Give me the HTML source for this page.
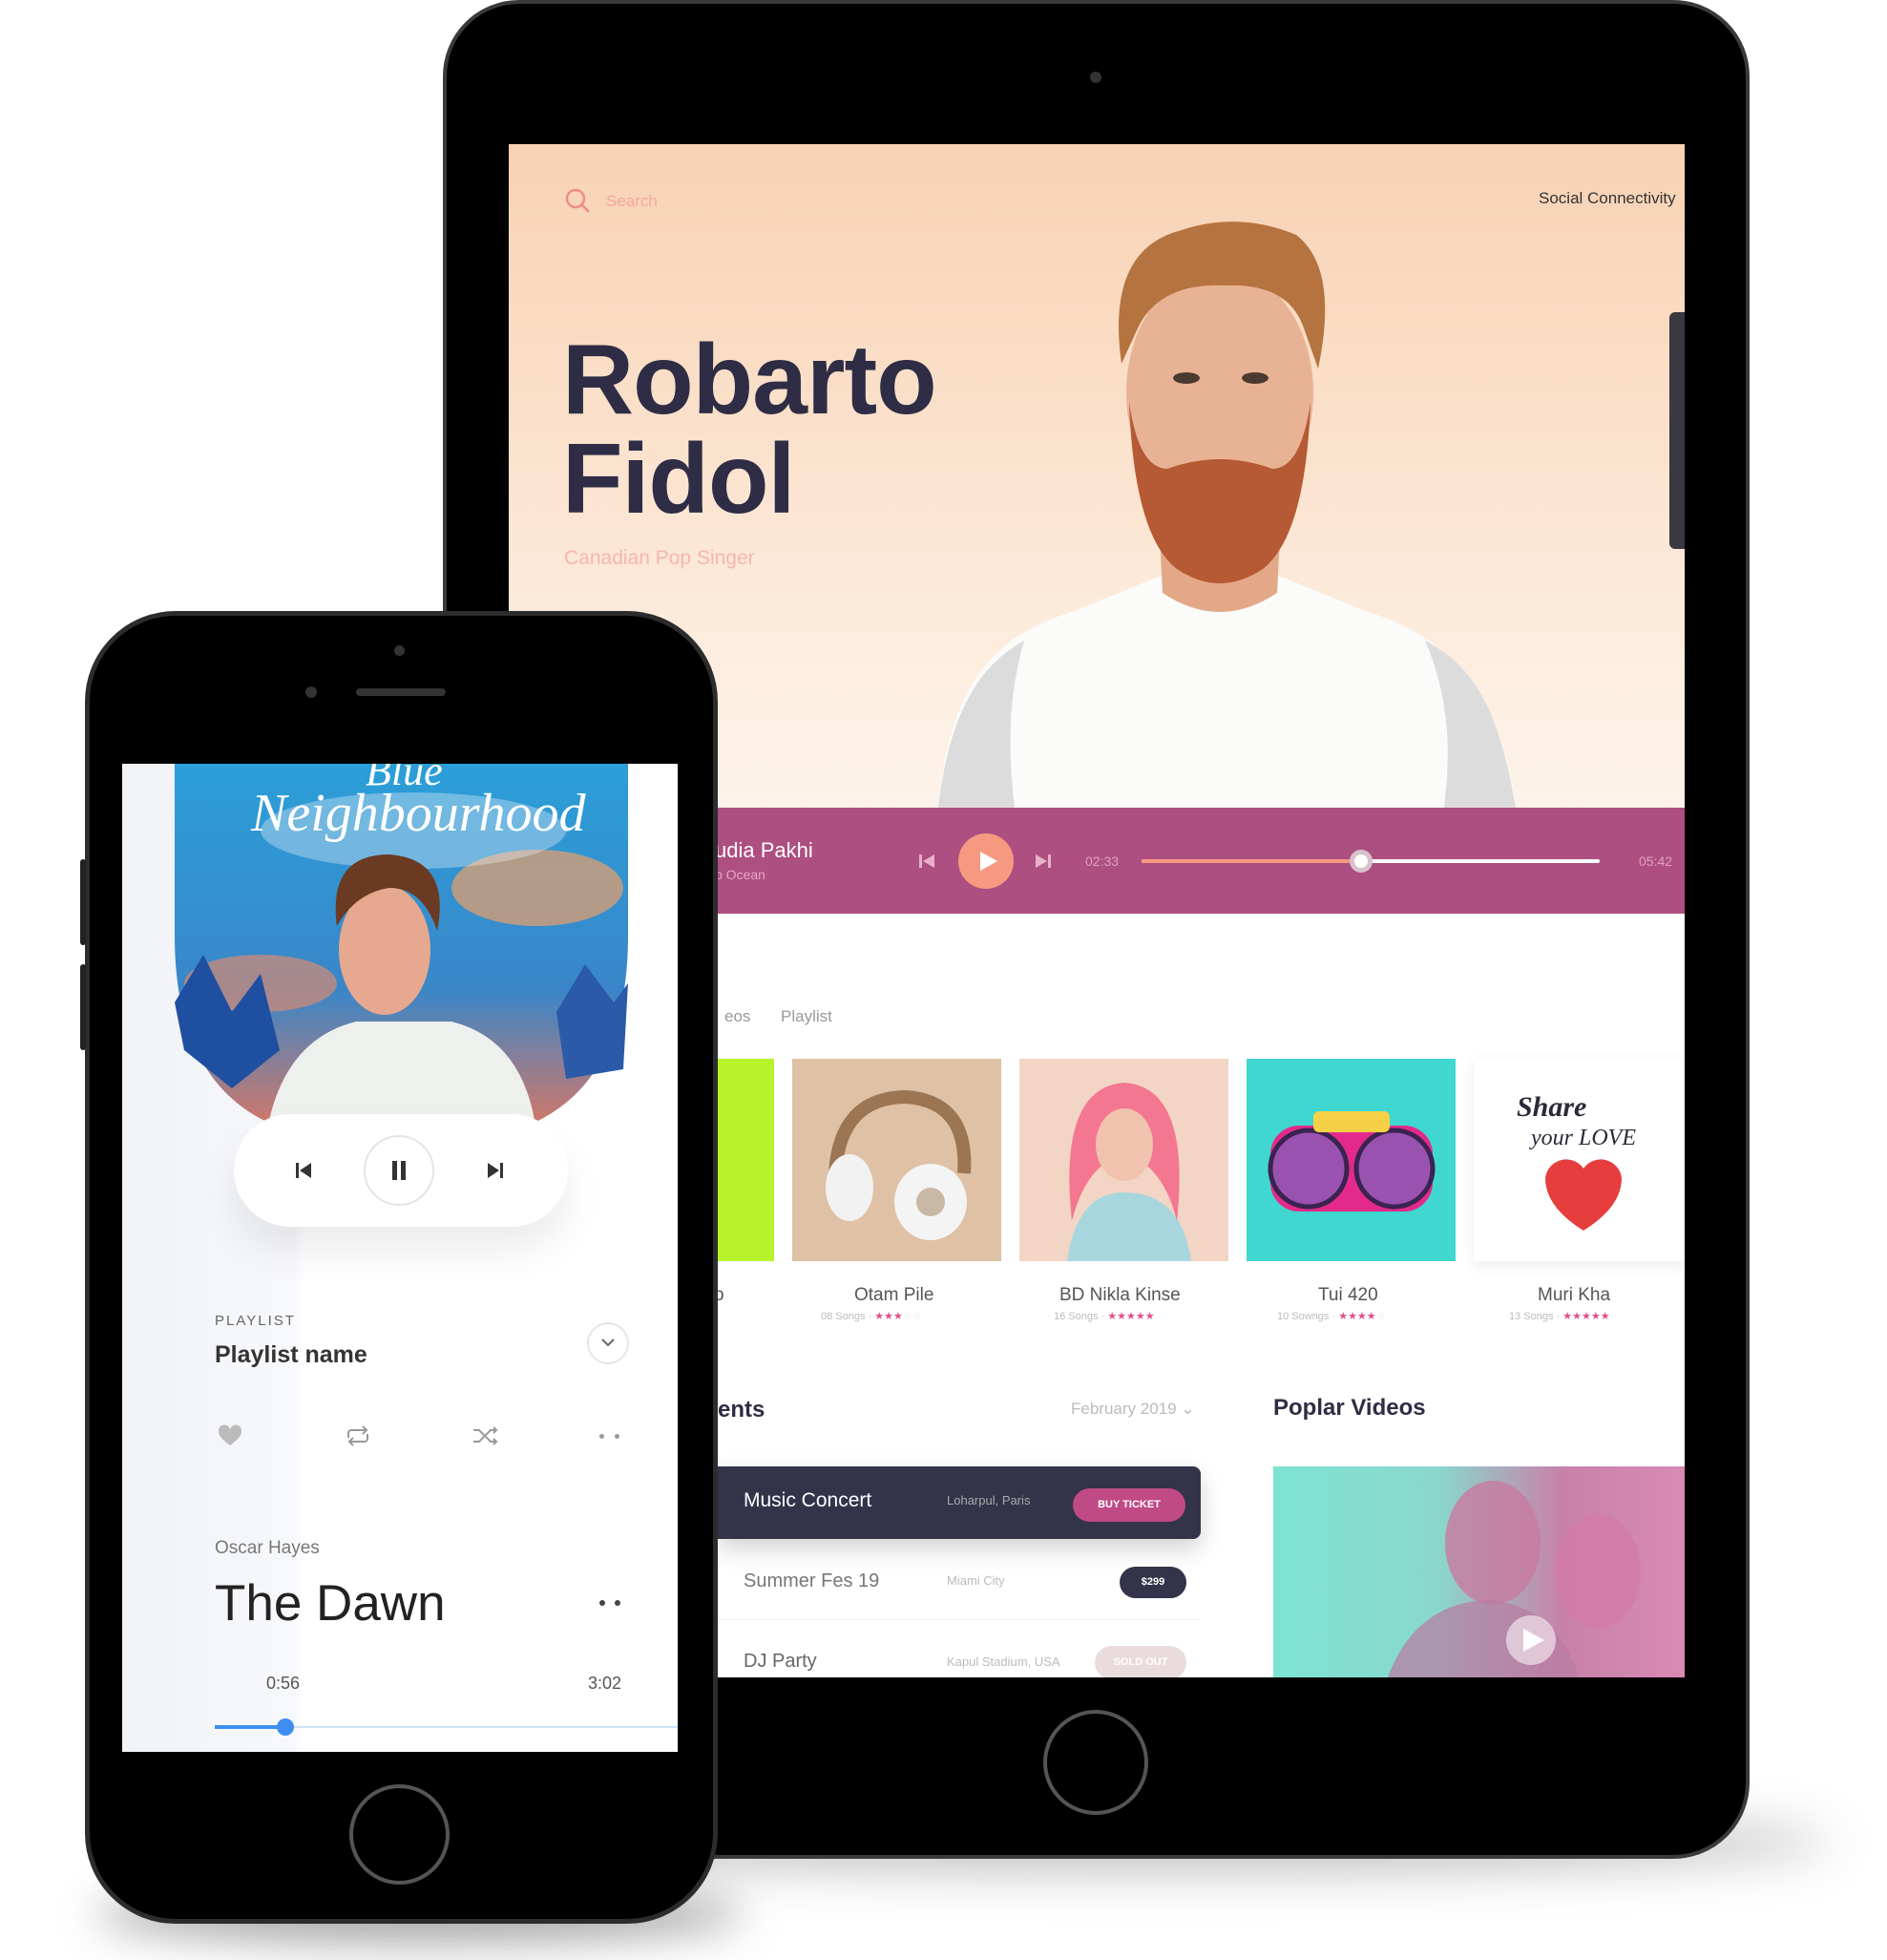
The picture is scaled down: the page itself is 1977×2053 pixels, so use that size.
<!DOCTYPE html>
<html><head><meta charset="utf-8"><style>
*{margin:0;padding:0;box-sizing:border-box}
body{width:1977px;height:2053px;background:#fff;position:relative;overflow:hidden;font-family:"Liberation Sans",sans-serif}
.a{position:absolute}
.t{position:absolute;white-space:nowrap}
</style></head><body>

<div class="a" style="left:520px;top:1900px;width:1400px;height:60px;border-radius:50%;background:rgba(0,0,0,.25);filter:blur(25px)"></div>
<div class="a" style="left:464px;top:0;width:1369px;height:1947px;background:#000;border-radius:80px;border:4px solid #3a3a3a"></div>
<div class="a" style="left:1142px;top:75px;width:12px;height:12px;border-radius:50%;background:#333"></div>
<div class="a" style="left:1093px;top:1791px;width:110px;height:110px;border-radius:50%;border:4px solid #555"></div>

<div class="a" style="left:533px;top:151px;width:1232px;height:1606px;background:#fff;overflow:hidden">
  <div class="a" style="left:0;top:0;width:1232px;height:695px;background:linear-gradient(#f8d2b4,#fdeee0 80%,#fdf3ea)"></div>
  <svg class="a" style="left:58px;top:45px" width="30" height="30" viewBox="0 0 30 30"><circle cx="12" cy="12" r="9" fill="none" stroke="#f08a8a" stroke-width="2.5"/><path d="M19 19l7 7" stroke="#f08a8a" stroke-width="2.5"/></svg>
  <div class="t" style="left:102px;top:50px;font-size:17px;color:#f4a7a0">Search</div>
  <div class="t" style="left:1079px;top:47px;font-size:17px;color:#333">Social Connectivity</div>
  <div class="t" style="left:56px;top:195px;font-size:104px;font-weight:bold;line-height:104px;color:#2e2d45;letter-spacing:-1px">Robarto<br>Fidol</div>
  <div class="t" style="left:58px;top:422px;font-size:21px;color:#f5b6ad">Canadian Pop Singer</div>
  <svg class="a" style="left:430px;top:70px" width="700" height="630" viewBox="0 0 700 630">
    <path d="M20 625 C30 520 60 450 160 420 L270 375 L360 375 L470 420 C570 450 610 520 625 625Z" fill="#fbfbfa"/>
    <path d="M20 625 C30 540 55 480 110 450 C90 520 95 580 100 625Z" fill="#dcdcdc"/>
    <path d="M625 625 C610 540 590 480 530 450 C560 520 555 580 550 625Z" fill="#dcdcdc"/>
    <path d="M250 300 L255 400 Q315 440 375 400 L380 300Z" fill="#e3a888"/>
    <ellipse cx="315" cy="190" rx="98" ry="130" fill="#e8b394"/>
    <path d="M220 200 Q225 340 270 375 Q315 405 360 375 Q405 340 410 200 Q400 270 370 270 Q315 250 260 270 Q230 270 220 200Z" fill="#b55a34"/>
    <path d="M212 160 Q195 40 275 20 Q335 0 395 25 Q440 60 418 165 L402 120 Q385 75 320 78 Q250 75 228 125Z" fill="#b5733f"/>
    <ellipse cx="280" cy="175" rx="14" ry="6" fill="#4a3a30"/><ellipse cx="352" cy="175" rx="14" ry="6" fill="#4a3a30"/>
  </svg>
  <div class="a" style="left:1216px;top:176px;width:16px;height:248px;background:#3a3840;border-radius:6px 0 0 6px"></div>
  <div class="a" style="left:0;top:695px;width:1232px;height:111px;background:#ad4f80"></div>
  <div class="t" style="left:216px;top:727px;font-size:22px;color:#fff">udia Pakhi</div>
  <div class="t" style="left:216px;top:757px;font-size:14px;color:#e7a8c6">p Ocean</div>
  <svg class="a" style="left:428px;top:743px" width="22" height="16" viewBox="0 0 22 16"><rect x="2" y="1" width="3" height="14" fill="#e9b0c9"/><path d="M18 1L6 8l12 7z" fill="#e9b0c9"/></svg>
  <div class="a" style="left:471px;top:722px;width:58px;height:58px;border-radius:50%;background:#f59a80"></div>
  <svg class="a" style="left:490px;top:739px" width="24" height="24" viewBox="0 0 24 24"><path d="M4 2l18 10-18 10z" fill="#fff"/></svg>
  <svg class="a" style="left:548px;top:743px" width="22" height="16" viewBox="0 0 22 16"><path d="M4 1l12 7-12 7z" fill="#e9b0c9"/><rect x="17" y="1" width="3" height="14" fill="#e9b0c9"/></svg>
  <div class="t" style="left:604px;top:743px;font-size:14px;color:#e39fbf">02:33</div>
  <div class="a" style="left:663px;top:749px;width:480px;height:4px;background:#fff;border-radius:2px"></div>
  <div class="a" style="left:663px;top:749px;width:230px;height:4px;background:#f59a80;border-radius:2px"></div>
  <div class="a" style="left:881px;top:739px;width:24px;height:24px;border-radius:50%;background:#fff;border:5px solid #d8c2cc"></div>
  <div class="t" style="left:1184px;top:743px;font-size:14px;color:#e39fbf">05:42</div>
  <div class="t" style="left:226px;top:904px;font-size:17px;color:#999">eos</div>
  <div class="t" style="left:285px;top:904px;font-size:17px;color:#999">Playlist</div>
  <div class="a" style="left:219px;top:958px;width:59px;height:212px;background:#b7f22a"></div>
  <div class="a" style="left:297px;top:958px;width:219px;height:212px;background:#dfc1a5"></div>
  <svg class="a" style="left:297px;top:958px" width="219" height="212"><path d="M45 120 Q50 40 120 40 Q185 45 180 120" fill="none" stroke="#9c7553" stroke-width="14"/><ellipse cx="60" cy="135" rx="25" ry="35" fill="#f2f2f2"/><ellipse cx="145" cy="150" rx="38" ry="40" fill="#f4f4f4"/><circle cx="145" cy="150" r="15" fill="#c9b8a4"/></svg>
  <div class="a" style="left:535px;top:958px;width:219px;height:212px;background:#f3d5c5"></div>
  <svg class="a" style="left:535px;top:958px" width="219" height="212"><path d="M50 212 Q60 140 110 140 Q170 140 180 212Z" fill="#a8d6de"/><path d="M55 170 Q40 30 110 25 Q180 30 165 170 Q150 110 110 100 Q70 110 55 170Z" fill="#f47792"/><ellipse cx="110" cy="90" rx="30" ry="38" fill="#f1c3ae"/></svg>
  <div class="a" style="left:773px;top:958px;width:219px;height:212px;background:#3fd7cf"></div>
  <svg class="a" style="left:773px;top:958px" width="219" height="212"><rect x="25" y="70" width="170" height="90" rx="30" fill="#e32a8a"/><circle cx="65" cy="115" r="40" fill="#9a52b0" stroke="#3a2350" stroke-width="5"/><circle cx="155" cy="115" r="40" fill="#9a52b0" stroke="#3a2350" stroke-width="5"/><rect x="70" y="55" width="80" height="22" rx="6" fill="#f6d046"/></svg>
  <div class="a" style="left:1011px;top:958px;width:221px;height:212px;background:#fff;box-shadow:0 4px 14px rgba(0,0,0,.08)"></div>
  <svg class="a" style="left:1011px;top:958px" width="219" height="212"><text x="45" y="60" font-family="Liberation Serif" font-style="italic" font-weight="bold" font-size="30" fill="#2a2a3a">Share</text><text x="60" y="90" font-family="Liberation Serif" font-style="italic" font-size="24" fill="#2a2a3a">your LOVE</text><path d="M75 125 a22 22 0 0 1 40 -10 a22 22 0 0 1 40 10 q0 30 -40 55 q-40 -25 -40 -55z" fill="#e63d3d"/></svg>
  <div class="t" style="left:215px;top:1195px;font-size:19px;color:#555">o</div>
  <div class="t" style="left:362px;top:1195px;font-size:19px;color:#555">Otam Pile</div>
  <div class="t" style="left:577px;top:1195px;font-size:19px;color:#555">BD Nikla Kinse</div>
  <div class="t" style="left:848px;top:1195px;font-size:19px;color:#555">Tui 420</div>
  <div class="t" style="left:1078px;top:1195px;font-size:19px;color:#555">Muri Kha</div>
  <div class="t" style="left:327px;top:1221px;font-size:11px;color:#bbb">08 Songs · <span style="color:#e0508a">★★★</span><span style="color:#ddd">☆☆</span></div>
  <div class="t" style="left:571px;top:1221px;font-size:11px;color:#bbb">16 Songs · <span style="color:#e0508a">★★★★★</span></div>
  <div class="t" style="left:805px;top:1221px;font-size:11px;color:#bbb">10 Sowngs · <span style="color:#e0508a">★★★★</span><span style="color:#ddd">☆</span></div>
  <div class="t" style="left:1048px;top:1221px;font-size:11px;color:#bbb">13 Songs · <span style="color:#e0508a">★★★★★</span></div>
  <div class="t" style="left:219px;top:1312px;font-size:24px;font-weight:bold;color:#2e2d45">ents</div>
  <div class="t" style="left:589px;top:1315px;font-size:17px;color:#bbb">February 2019 ⌄</div>
  <div class="t" style="left:801px;top:1310px;font-size:24px;font-weight:bold;color:#2e2d45">Poplar Videos</div>
  <div class="a" style="left:219px;top:1385px;width:506px;height:76px;background:#33334a;border-radius:0 8px 8px 0;box-shadow:0 10px 25px rgba(0,0,0,.18)"></div>
  <div class="t" style="left:246px;top:1409px;font-size:21px;color:#fff">Music Concert</div>
  <div class="t" style="left:459px;top:1413px;font-size:13px;color:#aaa">Loharpul, Paris</div>
  <div class="a" style="left:591px;top:1408px;width:118px;height:35px;border-radius:18px;background:#c04a86;color:#fff;font-size:11px;font-weight:bold;text-align:center;line-height:35px">BUY TICKET</div>
  <div class="t" style="left:246px;top:1494px;font-size:20px;color:#777">Summer Fes 19</div>
  <div class="t" style="left:459px;top:1497px;font-size:13px;color:#bbb">Miami City</div>
  <div class="a" style="left:640px;top:1490px;width:70px;height:33px;border-radius:17px;background:#33334a;color:#fff;font-size:11px;font-weight:bold;text-align:center;line-height:33px">$299</div>
  <div class="a" style="left:219px;top:1545px;width:506px;height:1px;background:#f0f0f0"></div>
  <div class="t" style="left:246px;top:1578px;font-size:20px;color:#666">DJ Party</div>
  <div class="t" style="left:459px;top:1582px;font-size:13px;color:#bbb">Kapul Stadium, USA</div>
  <div class="a" style="left:614px;top:1573px;width:96px;height:35px;border-radius:18px;background:#eadcdc;color:#fff;font-size:11px;font-weight:bold;text-align:center;line-height:35px">SOLD OUT</div>
  <div class="a" style="left:801px;top:1385px;width:431px;height:221px;background:linear-gradient(90deg,#7ee3d3 0%,#8ad8cc 40%,#c782a8 70%,#d98ab3 100%)"></div>
  <svg class="a" style="left:801px;top:1385px" width="431" height="221"><ellipse cx="230" cy="80" rx="50" ry="65" fill="#c87aa0" opacity=".8"/><path d="M120 221 Q150 140 230 140 Q300 150 320 221Z" fill="#b97ba2" opacity=".7"/><ellipse cx="340" cy="110" rx="45" ry="60" fill="#d47ca8" opacity=".85"/><circle cx="270" cy="182" r="26" fill="rgba(255,255,255,.55)"/><path d="M262 170l22 12-22 12z" fill="#fff"/></svg>
</div>

<div class="a" style="left:100px;top:1975px;width:680px;height:60px;border-radius:50%;background:rgba(0,0,0,.35);filter:blur(22px)"></div>
<div class="a" style="left:89px;top:640px;width:663px;height:1375px;background:#000;border-radius:95px;border:5px solid #2c2c2c"></div>
<div class="a" style="left:84px;top:900px;width:6px;height:90px;background:#222;border-radius:3px"></div>
<div class="a" style="left:84px;top:1010px;width:6px;height:90px;background:#222;border-radius:3px"></div>
<div class="a" style="left:413px;top:676px;width:11px;height:11px;border-radius:50%;background:#333"></div>
<div class="a" style="left:320px;top:719px;width:12px;height:12px;border-radius:50%;background:#333"></div>
<div class="a" style="left:373px;top:721px;width:94px;height:8px;border-radius:4px;background:#333"></div>
<div class="a" style="left:366px;top:1869px;width:105px;height:105px;border-radius:50%;border:4px solid #555"></div>

<div class="a" style="left:128px;top:800px;width:582px;height:1035px;background:linear-gradient(90deg,#f1f3f7 0,#f7f8fb 180px,#fff 190px);overflow:hidden">
  <svg class="a" style="left:55px;top:0" width="475" height="395" viewBox="0 0 475 395">
    <defs><linearGradient id="sk" x1="0" y1="0" x2="0" y2="1"><stop offset="0" stop-color="#2b9fd8"/><stop offset=".6" stop-color="#3a86c8"/><stop offset="1" stop-color="#e3765e"/></linearGradient></defs>
    <path d="M0 0H475V180Q475 380 300 395H175Q0 380 0 180Z" fill="url(#sk)"/>
    <ellipse cx="380" cy="130" rx="90" ry="40" fill="#e9a06a" opacity=".7"/>
    <ellipse cx="90" cy="230" rx="80" ry="30" fill="#f08b66" opacity=".6"/>
    <ellipse cx="250" cy="70" rx="160" ry="40" fill="#f1f4f8" opacity=".35"/>
    <path d="M0 250 L30 200 L60 260 L90 220 L110 300 L60 340 L10 300Z" fill="#1f4fa0"/>
    <path d="M400 260 L430 210 L460 250 L475 230 L470 320 L410 330Z" fill="#2b5aa8"/>
    <path d="M95 395 Q110 290 190 270 L290 270 Q370 290 380 395Z" fill="#eef0ee"/>
    <ellipse cx="220" cy="195" rx="48" ry="68" fill="#e6a88e"/>
    <path d="M170 170 Q160 95 225 95 Q290 100 275 175 Q260 130 225 130 Q190 135 170 170Z" fill="#6a3a22"/>
    <text x="200" y="22" font-family="Liberation Serif" font-style="italic" font-size="44" fill="#fff">Blue</text>
    <text x="80" y="70" font-family="Liberation Serif" font-style="italic" font-size="56" fill="#fff">Neighbourhood</text>
  </svg>
  <div class="a" style="left:117px;top:367px;width:350px;height:118px;border-radius:59px;background:#fff;box-shadow:0 25px 40px rgba(0,0,0,.08)"></div>
  <svg class="a" style="left:180px;top:416px" width="20" height="20" viewBox="0 0 20 20"><rect x="2" y="2" width="3" height="16" fill="#333"/><path d="M18 2L6 10l12 8z" fill="#333"/></svg>
  <div class="a" style="left:253px;top:389px;width:74px;height:74px;border-radius:50%;border:2px solid #e4e4e4"></div>
  <div class="a" style="left:283px;top:416px;width:5px;height:20px;background:#333"></div><div class="a" style="left:292px;top:416px;width:5px;height:20px;background:#333"></div>
  <svg class="a" style="left:381px;top:416px" width="20" height="20" viewBox="0 0 20 20"><path d="M2 2l12 8-12 8z" fill="#333"/><rect x="15" y="2" width="3" height="16" fill="#333"/></svg>
  <div class="t" style="left:97px;top:575px;font-size:15px;letter-spacing:2px;color:#666">PLAYLIST</div>
  <div class="t" style="left:97px;top:605px;font-size:25px;font-weight:bold;color:#333">Playlist name</div>
  <div class="a" style="left:487px;top:585px;width:44px;height:44px;border-radius:50%;border:2px solid #e5e5e5"></div>
  <svg class="a" style="left:500px;top:600px" width="18" height="14"><path d="M3 3l6 6 6-6" fill="none" stroke="#666" stroke-width="2"/></svg>
  <svg class="a" style="left:100px;top:692px" width="26" height="24" viewBox="0 0 26 24"><path d="M13 22C5 16 1 12 1 7a6 6 0 0 1 12-1 6 6 0 0 1 12 1c0 5-4 9-12 15z" fill="#bbb"/></svg>
  <svg class="a" style="left:232px;top:692px" width="30" height="24" viewBox="0 0 30 24"><path d="M5 14V9a3 3 0 0 1 3-3h16M25 10v5a3 3 0 0 1-3 3H6" fill="none" stroke="#999" stroke-width="2"/><path d="M20 2l4 4-4 4M10 14l-4 4 4 4" fill="none" stroke="#999" stroke-width="2"/></svg>
  <svg class="a" style="left:366px;top:692px" width="30" height="24" viewBox="0 0 30 24"><path d="M2 6h6l12 12h6M2 18h6l12-12h6" fill="none" stroke="#999" stroke-width="2"/><path d="M23 3l3 3-3 3M23 15l3 3-3 3" fill="none" stroke="#999" stroke-width="2"/></svg>
  <div class="a" style="left:500px;top:702px;width:5px;height:5px;border-radius:50%;background:#999"></div><div class="a" style="left:516px;top:702px;width:5px;height:5px;border-radius:50%;background:#999"></div>
  <div class="t" style="left:97px;top:811px;font-size:19px;color:#777">Oscar Hayes</div>
  <div class="t" style="left:97px;top:849px;font-size:53px;color:#222">The Dawn</div>
  <div class="a" style="left:500px;top:876px;width:6px;height:6px;border-radius:50%;background:#444"></div><div class="a" style="left:516px;top:876px;width:6px;height:6px;border-radius:50%;background:#444"></div>
  <div class="t" style="left:151px;top:953px;font-size:18px;color:#555">0:56</div>
  <div class="t" style="left:488px;top:953px;font-size:18px;color:#555">3:02</div>
  <div class="a" style="left:97px;top:1008px;width:485px;height:2px;background:#cfe2fb"></div>
  <div class="a" style="left:97px;top:1007px;width:74px;height:4px;background:#3d8ef0"></div>
  <div class="a" style="left:162px;top:1000px;width:18px;height:18px;border-radius:50%;background:#3d8ef0"></div>
</div>
</body></html>
